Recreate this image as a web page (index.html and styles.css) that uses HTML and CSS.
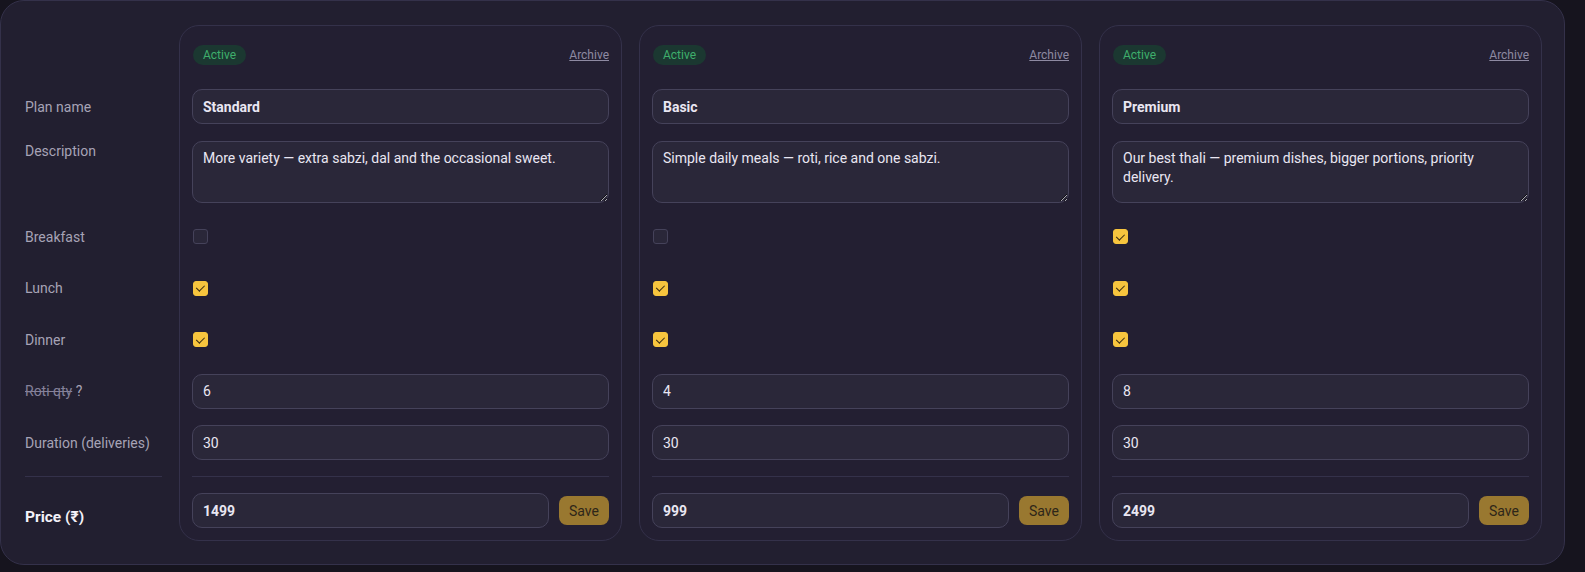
FILE: index.html
```html
<!DOCTYPE html>
<html lang="en">
<head>
    <meta charset="UTF-8">
    <meta name="viewport" content="width=device-width, initial-scale=1.0">
    <title>Plans</title>
    <link rel="stylesheet" href="styles.css">
</head>
<body>
    <div class="panel">
        <div class="labels">
            <div class="row head"></div>
            <div class="row">Plan name</div>
            <div class="row desc">Description</div>
            <div class="row">Breakfast</div>
            <div class="row">Lunch</div>
            <div class="row">Dinner</div>
            <div class="row"><span class="struck">Roti qty</span>&nbsp;?</div>
            <div class="row">Duration (deliveries)</div>
            <div class="divider"></div>
            <div class="row price-label">Price (₹)</div>
        </div>

        <div class="plan-card">
            <div class="row head">
                <span class="badge">Active</span>
                <a href="#" class="archive">Archive</a>
            </div>
            <div class="row"><input type="text" class="field bold" value="Standard"></div>
            <div class="row desc"><textarea class="field">More variety — extra sabzi, dal and the occasional sweet.</textarea></div>
            <div class="row"><input type="checkbox" class="check"></div>
            <div class="row"><input type="checkbox" class="check" checked></div>
            <div class="row"><input type="checkbox" class="check" checked></div>
            <div class="row"><input type="text" class="field" value="6"></div>
            <div class="row"><input type="text" class="field" value="30"></div>
            <div class="divider"></div>
            <div class="row price">
                <input type="text" class="field bold" value="1499">
                <button class="save">Save</button>
            </div>
        </div>

        <div class="plan-card">
            <div class="row head">
                <span class="badge">Active</span>
                <a href="#" class="archive">Archive</a>
            </div>
            <div class="row"><input type="text" class="field bold" value="Basic"></div>
            <div class="row desc"><textarea class="field">Simple daily meals — roti, rice and one sabzi.</textarea></div>
            <div class="row"><input type="checkbox" class="check"></div>
            <div class="row"><input type="checkbox" class="check" checked></div>
            <div class="row"><input type="checkbox" class="check" checked></div>
            <div class="row"><input type="text" class="field" value="4"></div>
            <div class="row"><input type="text" class="field" value="30"></div>
            <div class="divider"></div>
            <div class="row price">
                <input type="text" class="field bold" value="999">
                <button class="save">Save</button>
            </div>
        </div>

        <div class="plan-card">
            <div class="row head">
                <span class="badge">Active</span>
                <a href="#" class="archive">Archive</a>
            </div>
            <div class="row"><input type="text" class="field bold" value="Premium"></div>
            <div class="row desc"><textarea class="field">Our best thali — premium dishes, bigger portions, priority delivery.</textarea></div>
            <div class="row"><input type="checkbox" class="check" checked></div>
            <div class="row"><input type="checkbox" class="check" checked></div>
            <div class="row"><input type="checkbox" class="check" checked></div>
            <div class="row"><input type="text" class="field" value="8"></div>
            <div class="row"><input type="text" class="field" value="30"></div>
            <div class="divider"></div>
            <div class="row price">
                <input type="text" class="field bold" value="2499">
                <button class="save">Save</button>
            </div>
        </div>
    </div>
</body>
</html>
```

FILE: styles.css
```css
body {
    margin: 0;
    background: #16141e;
    font-family: Roboto, "Noto Sans", sans-serif;
    font-size: 14px;
    color: #e9e6f2;
}
.panel {
    width: 1565px;
    height: 565px;
    box-sizing: border-box;
    background: #221f30;
    border: 1px solid #34314a;
    border-radius: 24px;
    padding: 24px 22px 0 24px;
    display: flex;
    gap: 17px;
}
.labels,
.plan-card {
    display: flex;
    flex-direction: column;
    gap: 16.5px;
    padding: 13px 0 12px;
}
.labels {
    width: 137px;
    color: #a7a3b6;
}
.plan-card {
    width: 443px;
    box-sizing: border-box;
    height: 516px;
    padding: 12px;
    border: 1px solid #34314a;
    border-radius: 20px;
    background: #231f32;
}
.row {
    height: 35px;
    box-sizing: border-box;
    display: flex;
    align-items: center;
}
.row.head {
    height: 34.5px;
    justify-content: space-between;
}
.row.desc {
    height: 62px;
    align-items: flex-start;
}
.labels .row.desc {
    line-height: 20px;
}
.struck {
    text-decoration: line-through;
    color: #85819a;
}
.divider {
    height: 1px;
    background: #34314a;
    margin: -0.5px 0;
}
.price-label {
    padding-top: 13px;
    color: #f3f1f8;
    font-weight: 700;
    font-size: 15.5px;
}
.badge {
    background: #1b3831;
    color: #3fae6c;
    font-size: 12px;
    padding: 0 10px;
    height: 20px;
    line-height: 20px;
    border-radius: 10px;
    margin-left: 1px;
}
.archive {
    color: #8e8aa2;
    font-size: 12px;
    text-decoration: underline;
}
.field {
    width: 100%;
    height: 35px;
    box-sizing: border-box;
    background: #2a2739;
    border: 1px solid #45425a;
    border-radius: 10px;
    color: #e9e6f2;
    font-family: inherit;
    font-size: 14px;
    padding: 0 10px;
    outline: none;
}
.field.bold {
    font-weight: 700;
}
textarea.field {
    height: 62px;
    padding: 7px 10px;
    line-height: 19px;
    resize: vertical;
}
.check {
    appearance: none;
    width: 15px;
    height: 15px;
    margin: 0 0 0 1px;
    border: 1px solid #45425a;
    border-radius: 3px;
    background: #2a2739;
    position: relative;
}
.check:checked {
    background: #f7c53e;
    border-color: #f7c53e;
}
.check:checked::after {
    content: "";
    position: absolute;
    left: 4px;
    top: 1.5px;
    width: 3.5px;
    height: 7px;
    border: solid #3a2c10;
    border-width: 0 1.8px 1.8px 0;
    transform: rotate(45deg);
}
.price {
    gap: 10px;
}
.save {
    flex: none;
    width: 50px;
    height: 29px;
    background: #997830;
    color: #2e2619;
    border: 0;
    border-radius: 8px;
    font-family: inherit;
    font-size: 14px;
    cursor: pointer;
}
```
